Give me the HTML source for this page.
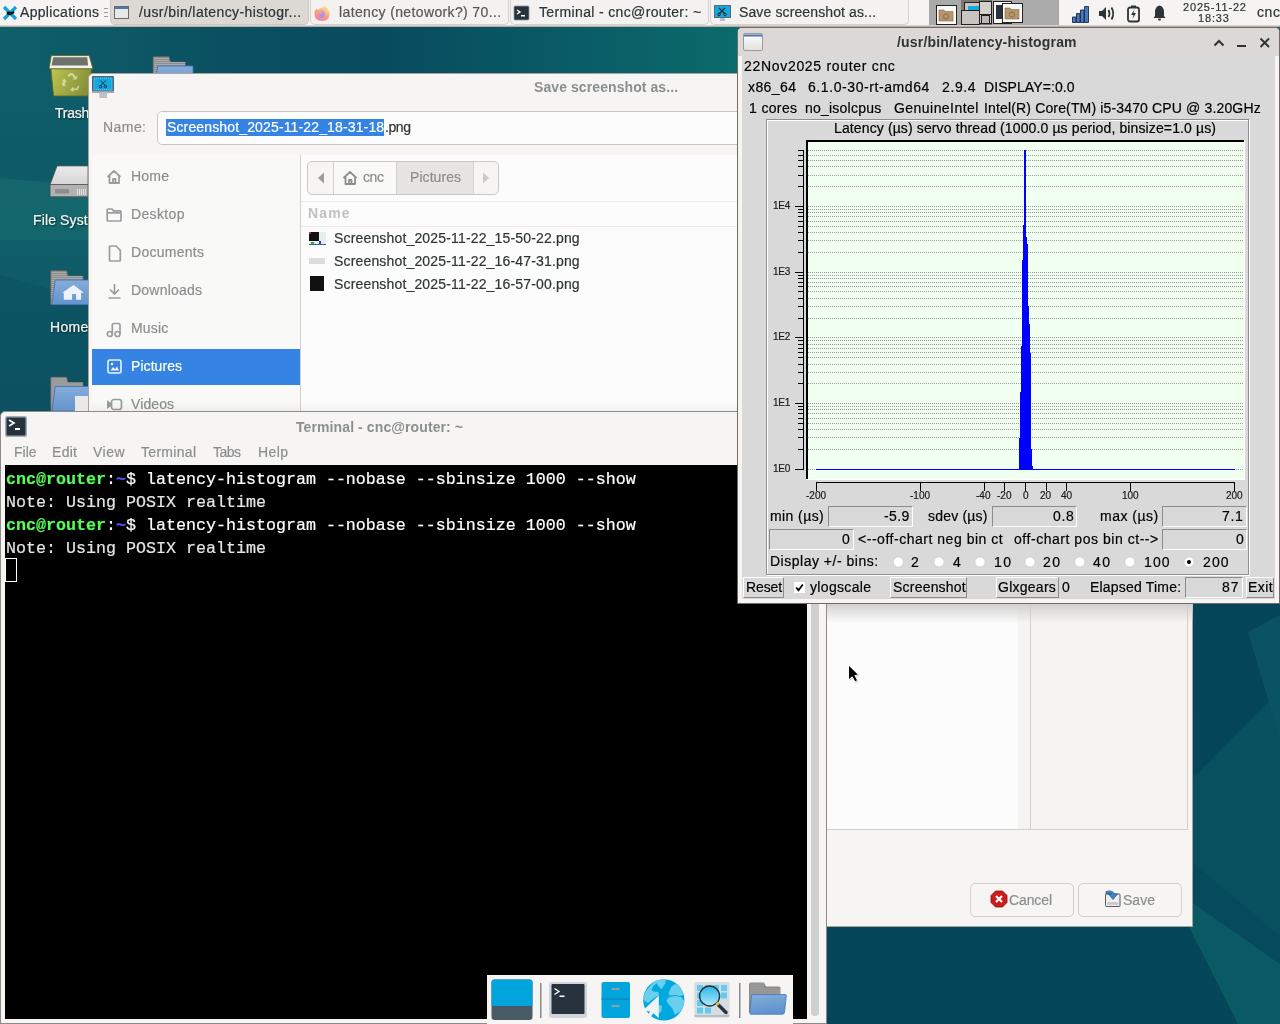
<!DOCTYPE html>
<html><head><meta charset="utf-8"><style>
*{margin:0;padding:0;box-sizing:border-box}
html,body{width:1280px;height:1024px;overflow:hidden;background:#0a4f60}
body{position:relative;font-family:"Liberation Sans",sans-serif}
.t{position:absolute;white-space:pre;line-height:1;will-change:transform;-webkit-text-stroke:0.2px currentColor}
.r{position:absolute}
svg{position:absolute;overflow:visible}
</style></head><body>

<svg style="left:0;top:0" width="1280" height="1024" viewBox="0 0 1280 1024">
<defs>
<linearGradient id="dgt" x1="0" y1="0" x2="1280" y2="0" gradientUnits="userSpaceOnUse">
<stop offset="0" stop-color="#0f5f6a"/><stop offset="0.2" stop-color="#0a4e61"/><stop offset="0.3" stop-color="#084b5f"/>
<stop offset="0.58" stop-color="#0b6b6c"/><stop offset="1" stop-color="#0b6b6c"/></linearGradient>
<linearGradient id="dgl" x1="0" y1="73" x2="0" y2="420" gradientUnits="userSpaceOnUse">
<stop offset="0" stop-color="#0f5e6a"/><stop offset="1" stop-color="#0b5061"/></linearGradient>
<linearGradient id="dgr" x1="820" y1="600" x2="1280" y2="1024" gradientUnits="userSpaceOnUse">
<stop offset="0" stop-color="#05455a"/><stop offset="1" stop-color="#05465b"/></linearGradient>
</defs>
<rect width="1280" height="1024" fill="url(#dgr)"/>
<rect x="0" y="27" width="1280" height="60" fill="url(#dgt)"/>
<rect x="0" y="73" width="88" height="350" fill="url(#dgl)"/>
<path d="M0 178 L88 186 L88 240 L0 240 Z" fill="#15696d" opacity="0.85"/>
<path d="M0 240 L88 240 L88 300 L0 275 Z" fill="#11606a" opacity="0.6"/>
<path d="M1193 778 L1280 690 L1280 937 L1193 863 Z" fill="#08505f"/>
<path d="M1248 632 L1280 615 L1280 740 Z" fill="#0b5264"/>
<path d="M1193 863 L1280 937 L1280 964 L1193 903 Z" fill="#064a5e"/>
<path d="M1193 903 L1280 964 L1280 1024 L1238 1024 L1188 925 Z" fill="#0a5a66"/>
</svg>
<svg style="left:0;top:0" width="260" height="420" viewBox="0 0 260 420">
<defs>
<linearGradient id="tbg" x1="0" y1="0" x2="1" y2="0.3"><stop offset="0" stop-color="#bcc550"/><stop offset="1" stop-color="#87913a"/></linearGradient>
<linearGradient id="fgb" x1="0" y1="0" x2="0" y2="1"><stop offset="0" stop-color="#85acd9"/><stop offset="1" stop-color="#6394cd"/></linearGradient>
<linearGradient id="hdg" x1="0" y1="0" x2="0" y2="1"><stop offset="0" stop-color="#ebebeb"/><stop offset="1" stop-color="#d6d6d6"/></linearGradient>
</defs>
<path d="M50.8 68.5 L91.6 68.5 L88 96 L53.5 96 Z" fill="url(#tbg)" stroke="#5f6614" stroke-width="0.9"/>
<path d="M51.3 55.6 L89.2 55.6 L93 68.8 L49 68.8 Z" fill="#f2f2f0" stroke="#5f6614" stroke-width="0.9"/>
<path d="M53.2 57.3 L87.3 57.3 L88 65.6 L51.5 65.6 Z" fill="#6f716b"/>
<g fill="#d9ddab" opacity="0.85">
<path d="M67.5 75.5 L70 73 L73 73.2 L75.5 76.5 L77.5 75.5 L76.5 79.5 L72.5 79.5 L74 78.3 L72 75.5 L70 75.5 L69 77.5 Z"/>
<path d="M62.5 80 L65 78.8 L66.5 81.5 L64.5 84.5 L66 86 L62.5 86 L61.5 82 L63 83 Z"/>
<path d="M70 90 L73.5 86.5 L73.5 88.5 L76.5 88.5 L78 85.5 L79.5 86.5 L77.5 90 L73.5 90 L73.5 92 Z"/>
</g>
<path d="M57.1 165.9 L88 165.9 L88 184.5 L50.1 184.5 Z" fill="url(#hdg)" stroke="#555" stroke-width="0.8"/>
<path d="M50.1 184.5 L88 184.5 L88 196.7 L50.1 196.7 Z" fill="#b2b2b2" stroke="#555" stroke-width="0.8"/>
<rect x="55" y="189" width="14" height="4.5" fill="#8e8e8e"/>
<g fill="#e8e8e8"><rect x="77" y="189" width="0.9" height="6"/><rect x="79" y="189" width="0.9" height="6"/><rect x="81" y="189" width="0.9" height="6"/><rect x="83" y="189" width="0.9" height="6"/><rect x="85" y="189" width="0.9" height="6"/></g>
<path d="M50.6 271.5 Q50.6 270.5 51.6 270.5 L66.6 270.5 L68.1 276.0 L83.1 276.0 L83.1 304.5 L50.6 304.5 Z" fill="#8c8c8c" stroke="#5a5a5a" stroke-width="0.6"/>
<g stroke="#aaaaaa" stroke-width="1"><line x1="51.6" y1="272.5" x2="66.6" y2="272.5"/><line x1="51.6" y1="274.5" x2="66.6" y2="274.5"/><line x1="51.6" y1="276.5" x2="82.6" y2="276.5"/><line x1="51.6" y1="278.5" x2="82.6" y2="278.5"/><line x1="51.6" y1="280.5" x2="82.6" y2="280.5"/><line x1="51.6" y1="282.5" x2="82.6" y2="282.5"/><line x1="51.6" y1="284.5" x2="82.6" y2="284.5"/><line x1="51.6" y1="286.5" x2="82.6" y2="286.5"/><line x1="51.6" y1="288.5" x2="82.6" y2="288.5"/><line x1="51.6" y1="290.5" x2="82.6" y2="290.5"/><line x1="51.6" y1="292.5" x2="82.6" y2="292.5"/><line x1="51.6" y1="294.5" x2="82.6" y2="294.5"/><line x1="51.6" y1="296.5" x2="82.6" y2="296.5"/><line x1="51.6" y1="298.5" x2="82.6" y2="298.5"/></g>
<path d="M55.2 280.0 L90.6 280.0 L90.6 304.7 L52.0 304.7 Z" fill="url(#fgb)" stroke="#3f6fb0" stroke-width="0.8"/><path d="M73.6 285.0 L83.80000000000001 292.8 L81.1 292.8 L81.1 299.8 L76.1 299.8 L76.1 294.0 L72.1 294.0 L72.1 299.8 L63.8 299.8 L63.8 292.8 L62.3 292.8 Z" fill="#eef3fa"/><path d="M50.6 378 Q50.6 377 51.6 377 L66.6 377 L68.1 382.5 L83.1 382.5 L83.1 411 L50.6 411 Z" fill="#8c8c8c" stroke="#5a5a5a" stroke-width="0.6"/>
<g stroke="#aaaaaa" stroke-width="1"><line x1="51.6" y1="379" x2="66.6" y2="379"/><line x1="51.6" y1="381" x2="66.6" y2="381"/><line x1="51.6" y1="383" x2="82.6" y2="383"/><line x1="51.6" y1="385" x2="82.6" y2="385"/><line x1="51.6" y1="387" x2="82.6" y2="387"/><line x1="51.6" y1="389" x2="82.6" y2="389"/><line x1="51.6" y1="391" x2="82.6" y2="391"/><line x1="51.6" y1="393" x2="82.6" y2="393"/><line x1="51.6" y1="395" x2="82.6" y2="395"/><line x1="51.6" y1="397" x2="82.6" y2="397"/><line x1="51.6" y1="399" x2="82.6" y2="399"/><line x1="51.6" y1="401" x2="82.6" y2="401"/><line x1="51.6" y1="403" x2="82.6" y2="403"/><line x1="51.6" y1="405" x2="82.6" y2="405"/></g>
<path d="M55.2 386.5 L90.6 386.5 L90.6 411.2 L52.0 411.2 Z" fill="url(#fgb)" stroke="#3f6fb0" stroke-width="0.8"/><path d="M153 57.5 Q153 56.5 154 56.5 L169 56.5 L170.5 62.0 L185.5 62.0 L185.5 90.5 L153 90.5 Z" fill="#8c8c8c" stroke="#5a5a5a" stroke-width="0.6"/>
<g stroke="#aaaaaa" stroke-width="1"><line x1="154" y1="58.5" x2="169" y2="58.5"/><line x1="154" y1="60.5" x2="169" y2="60.5"/><line x1="154" y1="62.5" x2="185" y2="62.5"/><line x1="154" y1="64.5" x2="185" y2="64.5"/><line x1="154" y1="66.5" x2="185" y2="66.5"/><line x1="154" y1="68.5" x2="185" y2="68.5"/><line x1="154" y1="70.5" x2="185" y2="70.5"/><line x1="154" y1="72.5" x2="185" y2="72.5"/><line x1="154" y1="74.5" x2="185" y2="74.5"/><line x1="154" y1="76.5" x2="185" y2="76.5"/><line x1="154" y1="78.5" x2="185" y2="78.5"/><line x1="154" y1="80.5" x2="185" y2="80.5"/><line x1="154" y1="82.5" x2="185" y2="82.5"/><line x1="154" y1="84.5" x2="185" y2="84.5"/></g>
<path d="M157.6 66.0 L193 66.0 L193 90.7 L154.4 90.7 Z" fill="url(#fgb)" stroke="#3f6fb0" stroke-width="0.8"/>
<rect x="75" y="396" width="13" height="15" fill="#e8e8e8"/>
</svg>
<div class="t" style="left:54.80px;top:106.15px;font-size:14px;color:#f4f4f4;font-family:'Liberation Sans', sans-serif;letter-spacing:-0.227px;text-shadow:1px 1px 2px rgba(0,0,0,.6);">Trash</div>
<div class="t" style="left:33.00px;top:213.15px;font-size:14px;color:#f4f4f4;font-family:'Liberation Sans', sans-serif;letter-spacing:0.122px;text-shadow:1px 1px 2px rgba(0,0,0,.6);">File System</div>
<div class="t" style="left:50.00px;top:320.15px;font-size:14px;color:#f4f4f4;font-family:'Liberation Sans', sans-serif;letter-spacing:0.354px;text-shadow:1px 1px 2px rgba(0,0,0,.6);">Home</div>
<div class="r" style="left:88px;top:73px;width:1105px;height:854px;background:#f6f5f4;border-radius:5px 5px 0 0;border:1px solid #aaa39d;"></div>
<svg style="left:92px;top:76px" width="23" height="23" viewBox="0 0 23 23">
<rect x="0" y="0" width="22" height="16.5" rx="0.8" fill="#56636d"/>
<rect x="1.3" y="1.3" width="19.4" height="13.2" fill="#12a8e0"/>
<rect x="2.2" y="2.2" width="17.6" height="11.4" fill="none" stroke="#e8f6fc" stroke-width="0.5" stroke-dasharray="0.8 1.2"/>
<rect x="0" y="14.8" width="22" height="1.7" fill="#9aa5ad"/>
<rect x="7.3" y="16.5" width="7.6" height="5.5" fill="#b9c3c9"/>
<path d="M8.3 4.5 L13.8 10 M13.8 4.5 L8.3 10" stroke="#1a2a35" stroke-width="0.9"/>
<circle cx="8.5" cy="10.6" r="1.3" fill="none" stroke="#1a2a35" stroke-width="0.9"/><circle cx="13.4" cy="10.6" r="1.3" fill="none" stroke="#1a2a35" stroke-width="0.9"/></svg>
<div class="t" style="left:533.50px;top:80.15px;font-size:14px;color:#8b8e8f;font-family:'Liberation Sans', sans-serif;font-weight:700;-webkit-text-stroke:0;letter-spacing:0.082px;">Save screenshot as...</div>
<div class="t" style="left:102.50px;top:120.15px;font-size:14px;color:#8b8e8f;font-family:'Liberation Sans', sans-serif;letter-spacing:0.445px;">Name:</div>
<div class="r" style="left:157px;top:111px;width:700px;height:34px;background:#fcfcfc;border:1px solid #cdc7c2;border-radius:5px"></div>
<div class="r" style="left:166px;top:119px;width:218px;height:17px;background:#3584e4;"></div>
<div class="t" style="left:166.50px;top:120.15px;font-size:14px;color:#ffffff;font-family:'Liberation Sans', sans-serif;letter-spacing:0.142px;">Screenshot_2025-11-22_18-31-18</div>
<div class="t" style="left:385.00px;top:120.15px;font-size:14px;color:#2e3436;font-family:'Liberation Sans', sans-serif;letter-spacing:-0.411px;">.png</div>
<div class="r" style="left:92px;top:155px;width:208px;height:256px;background:#f9f9f8;"></div>
<div class="r" style="left:300px;top:155px;width:1px;height:256px;background:#d5d0cc;"></div>
<div class="r" style="left:301px;top:155px;width:436px;height:256px;background:#fcfcfc;"></div>
<div class="r" style="left:92px;top:349px;width:208px;height:36px;background:#3584e4;"></div>
<div class="t" style="left:130.50px;top:169.15px;font-size:14px;color:#8b8e8f;font-family:'Liberation Sans', sans-serif;letter-spacing:0.224px;">Home</div>
<div class="t" style="left:130.50px;top:207.15px;font-size:14px;color:#8b8e8f;font-family:'Liberation Sans', sans-serif;letter-spacing:0.359px;">Desktop</div>
<div class="t" style="left:130.50px;top:245.15px;font-size:14px;color:#8b8e8f;font-family:'Liberation Sans', sans-serif;letter-spacing:0.277px;">Documents</div>
<div class="t" style="left:130.50px;top:283.15px;font-size:14px;color:#8b8e8f;font-family:'Liberation Sans', sans-serif;letter-spacing:0.221px;">Downloads</div>
<div class="t" style="left:130.50px;top:321.15px;font-size:14px;color:#8b8e8f;font-family:'Liberation Sans', sans-serif;letter-spacing:0.188px;">Music</div>
<div class="t" style="left:130.50px;top:359.15px;font-size:14px;color:#ffffff;font-family:'Liberation Sans', sans-serif;letter-spacing:0.062px;">Pictures</div>
<div class="t" style="left:130.50px;top:397.15px;font-size:14px;color:#8b8e8f;font-family:'Liberation Sans', sans-serif;letter-spacing:0.091px;">Videos</div>
<svg style="left:106px;top:169px" width="17" height="16" viewBox="0 0 17 16">
<path d="M1.5 8 L8 1.8 L14.5 8 M3.5 6.5 L3.5 14 L13 14 L13 6.5 M7 14 L7 10 L9.5 10 L9.5 14" stroke="#9a9d9e" stroke-width="1.8" fill="none" stroke-linejoin="round"/></svg>
<svg style="left:106px;top:208px" width="17" height="14" viewBox="0 0 17 14">
<path d="M1.2 2 Q1.2 1 2.2 1 L6 1 L7.5 2.8 L14 2.8 Q15 2.8 15 3.8 L15 12 Q15 13 14 13 L2.2 13 Q1.2 13 1.2 12 Z M1.2 4.8 L15 4.8" stroke="#9a9d9e" stroke-width="1.7" fill="none"/></svg>
<svg style="left:108px;top:245px" width="14" height="17" viewBox="0 0 14 17">
<path d="M1.5 2 Q1.5 1 2.5 1 L8 1 L12.3 5.3 L12.3 15 Q12.3 16 11.3 16 L2.5 16 Q1.5 16 1.5 15 Z" stroke="#9a9d9e" stroke-width="1.7" fill="none"/></svg>
<svg style="left:107px;top:283px" width="15" height="16" viewBox="0 0 15 16">
<path d="M7.5 1 L7.5 10.5 M3 6.5 L7.5 11 L12 6.5 M1.5 15 L13.5 15" stroke="#9a9d9e" stroke-width="1.7" fill="none"/></svg>
<svg style="left:106px;top:322px" width="16" height="16" viewBox="0 0 16 16">
<circle cx="3.8" cy="12" r="2.5" stroke="#9a9d9e" stroke-width="1.7" fill="none"/><circle cx="11.5" cy="12" r="2.5" stroke="#9a9d9e" stroke-width="1.7" fill="none"/>
<path d="M6.3 12 L6.3 3 Q6.3 1.5 8 1.5 L12.5 1.5 Q14 1.5 14 3 L14 12" stroke="#9a9d9e" stroke-width="1.7" fill="none"/></svg>
<svg style="left:107px;top:359px" width="15" height="15" viewBox="0 0 15 15">
<rect x="1" y="1" width="13" height="13" rx="2" stroke="#fff" stroke-width="1.6" fill="none" opacity="0.9"/>
<path d="M3.5 11.5 L6 8 L8 10 L10 7.5 L12 11.5 Z" fill="#fff" opacity="0.9"/><circle cx="5" cy="5" r="1.2" fill="#fff"/></svg>
<svg style="left:106px;top:398px" width="17" height="13" viewBox="0 0 17 13">
<path d="M1 2 L1 11 L5 8 L5 5 Z" fill="#9a9d9e"/><rect x="5.5" y="1.5" width="10" height="10" rx="2.5" stroke="#9a9d9e" stroke-width="1.7" fill="none"/></svg>
<div class="r" style="left:92px;top:401px;width:645px;height:10px;background:linear-gradient(rgba(0,0,0,0),rgba(0,0,0,0.045));"></div>
<div class="r" style="left:307px;top:161px;width:192px;height:34px;background:#f6f5f4;border:1px solid #cdc7c2;border-radius:5px"></div>
<div class="r" style="left:334px;top:162px;width:63px;height:32px;background:#f9f9f8;"></div>
<div class="r" style="left:397px;top:162px;width:76px;height:32px;background:#e6e5e3;"></div>
<div class="r" style="left:333px;top:162px;width:1px;height:32px;background:#d5d0cc;"></div>
<div class="r" style="left:396px;top:162px;width:1px;height:32px;background:#d5d0cc;"></div>
<div class="r" style="left:473px;top:162px;width:1px;height:32px;background:#d5d0cc;"></div>
<svg style="left:317px;top:172px" width="8" height="12" viewBox="0 0 8 12"><path d="M7 0.5 L1 6 L7 11.5 Z" fill="#9a9d9e"/></svg>
<svg style="left:482px;top:172px" width="8" height="12" viewBox="0 0 8 12"><path d="M1 0.5 L7 6 L1 11.5 Z" fill="#c9cbcb"/></svg>
<svg style="left:342px;top:170px" width="17" height="16" viewBox="0 0 17 16">
<path d="M1.5 8 L8 1.8 L14.5 8 M3.5 6.5 L3.5 14 L13 14 L13 6.5 M7 14 L7 10 L9.5 10 L9.5 14" stroke="#8b8e8f" stroke-width="1.8" fill="none" stroke-linejoin="round"/></svg>
<div class="t" style="left:362.50px;top:170.15px;font-size:14px;color:#8b8e8f;font-family:'Liberation Sans', sans-serif;letter-spacing:-0.391px;">cnc</div>
<div class="t" style="left:409.50px;top:170.15px;font-size:14px;color:#8b8e8f;font-family:'Liberation Sans', sans-serif;letter-spacing:0.062px;">Pictures</div>
<div class="r" style="left:301px;top:201px;width:436px;height:1px;background:#eeedec;"></div>
<div class="t" style="left:308.00px;top:206.15px;font-size:14px;color:#c0c1c1;font-family:'Liberation Sans', sans-serif;font-weight:700;-webkit-text-stroke:0;letter-spacing:1.125px;">Name</div>
<div class="r" style="left:301px;top:226px;width:436px;height:1px;background:#eeedec;"></div>
<div class="t" style="left:333.50px;top:231.15px;font-size:14px;color:#2e3436;font-family:'Liberation Sans', sans-serif;letter-spacing:0.163px;">Screenshot_2025-11-22_15-50-22.png</div>
<div class="t" style="left:333.50px;top:254.15px;font-size:14px;color:#2e3436;font-family:'Liberation Sans', sans-serif;letter-spacing:0.163px;">Screenshot_2025-11-22_16-47-31.png</div>
<div class="t" style="left:333.50px;top:277.15px;font-size:14px;color:#2e3436;font-family:'Liberation Sans', sans-serif;letter-spacing:0.163px;">Screenshot_2025-11-22_16-57-00.png</div>
<svg style="left:309px;top:232px" width="17" height="14" viewBox="0 0 17 14">
<rect x="0" y="0" width="17" height="13" fill="#e8eef0"/><rect x="0" y="0" width="10" height="9" fill="#111"/>
<rect x="0" y="0" width="2" height="2" fill="#c33"/><rect x="2" y="10" width="3" height="2" fill="#3a3"/><rect x="10" y="9" width="2" height="3" fill="#33c"/>
<rect x="0" y="12" width="17" height="1" fill="#2a6a8a"/></svg>
<div class="r" style="left:309px;top:258px;width:16px;height:6px;background:#dcdcdc;"></div>
<div class="r" style="left:310px;top:276px;width:14px;height:15px;background:#111;"></div>
<div class="r" style="left:827px;top:603px;width:203px;height:227px;background:#fcfcfc;"></div>
<div class="r" style="left:1018px;top:603px;width:12px;height:227px;background:#f4f4f3;"></div>
<div class="r" style="left:1030px;top:603px;width:1px;height:227px;background:#d5d0cc;"></div>
<div class="r" style="left:1031px;top:603px;width:157px;height:227px;background:#f5f4f2;"></div>
<div class="r" style="left:1187px;top:603px;width:1px;height:227px;background:#d5d0cc;"></div>
<div class="r" style="left:827px;top:829px;width:361px;height:1px;background:#d5d0cc;"></div>
<div class="r" style="left:827px;top:603px;width:366px;height:20px;background:linear-gradient(#d0cfce,rgba(246,245,244,0));"></div>
<div class="r" style="left:970px;top:883px;width:104px;height:34px;background:#f6f5f4;border:1px solid #d5d0cc;border-radius:5px"></div>
<div class="r" style="left:1078px;top:883px;width:104px;height:34px;background:#f6f5f4;border:1px solid #d5d0cc;border-radius:5px"></div>
<svg style="left:990px;top:890px" width="18" height="18" viewBox="0 0 18 18">
<path d="M5.5 1 L12.5 1 L17 5.5 L17 12.5 L12.5 17 L5.5 17 L1 12.5 L1 5.5 Z" fill="#d01b1b" stroke="#8a0e0e" stroke-width="0.8"/>
<path d="M6 6 L12 12 M12 6 L6 12" stroke="#fff" stroke-width="2.2"/></svg>
<div class="t" style="left:1009.00px;top:893.15px;font-size:14px;color:#8b8e8f;font-family:'Liberation Sans', sans-serif;letter-spacing:-0.113px;">Cancel</div>
<svg style="left:1104px;top:889px" width="18" height="19" viewBox="0 0 18 19">
<rect x="1.5" y="5" width="14.5" height="12.5" rx="0.8" fill="#eeeeee" stroke="#5a5a5a" stroke-width="1"/>
<rect x="3" y="13.5" width="11.5" height="2.5" fill="#cfcfcf"/>
<path d="M4 13.8 L13.5 13.8" stroke="#888" stroke-width="0.5" stroke-dasharray="1 0.8"/>
<path d="M2 2.5 Q8 0.5 10.5 5 L13.5 5 L9 10.5 L4.5 5 L7.5 5 Q6 3.5 2 5 Z" fill="#3f87cc" stroke="#1f4f80" stroke-width="0.7" stroke-linejoin="round"/>
</svg>
<div class="t" style="left:1123.00px;top:893.15px;font-size:14px;color:#8b8e8f;font-family:'Liberation Sans', sans-serif;letter-spacing:0.031px;">Save</div>
<div class="r" style="left:0px;top:411px;width:827px;height:613px;background:#f6f5f4;border:1px solid #8f8a85;border-radius:5px 5px 0 0"></div>
<div class="r" style="left:5px;top:465px;width:802px;height:554px;background:#000;"></div>
<div class="r" style="left:811px;top:600px;width:8px;height:416px;background:#cfcfcf;border-radius:4px"></div>
<svg style="left:5px;top:416px" width="22" height="21" viewBox="0 0 22 21">
<rect x="0.75" y="0.75" width="20.5" height="19.5" rx="1.5" fill="#27323c" stroke="#a3adb5" stroke-width="1.5"/>
<path d="M4 4 L9 7 L4 10" stroke="#fff" stroke-width="1.6" fill="none"/><rect x="10" y="12" width="5" height="2" fill="#fff"/></svg>
<div class="t" style="left:295.50px;top:419.95px;font-size:14px;color:#8b8e8f;font-family:'Liberation Sans', sans-serif;font-weight:700;-webkit-text-stroke:0;letter-spacing:0.101px;">Terminal - cnc@router: ~</div>
<div class="t" style="left:14.00px;top:445.15px;font-size:14px;color:#8b8e8f;font-family:'Liberation Sans', sans-serif;letter-spacing:-0.016px;">File</div>
<div class="t" style="left:52.00px;top:445.15px;font-size:14px;color:#8b8e8f;font-family:'Liberation Sans', sans-serif;letter-spacing:0.292px;">Edit</div>
<div class="t" style="left:93.00px;top:445.15px;font-size:14px;color:#8b8e8f;font-family:'Liberation Sans', sans-serif;letter-spacing:0.469px;">View</div>
<div class="t" style="left:141.00px;top:445.15px;font-size:14px;color:#8b8e8f;font-family:'Liberation Sans', sans-serif;letter-spacing:0.304px;">Terminal</div>
<div class="t" style="left:213.00px;top:445.15px;font-size:14px;color:#8b8e8f;font-family:'Liberation Sans', sans-serif;letter-spacing:-0.521px;">Tabs</div>
<div class="t" style="left:258.00px;top:445.15px;font-size:14px;color:#8b8e8f;font-family:'Liberation Sans', sans-serif;letter-spacing:0.406px;">Help</div>
<div class="t" style="left:6px;top:471.92px;font-size:16.67px;font-family:'Liberation Mono',monospace;"><span style="color:#55ff55;font-weight:700;">cnc@router</span><span style="color:#ffffff;">:</span><span style="color:#5555ff;font-weight:700;">~</span><span style="color:#ffffff;">$</span><span style="color:#ffffff;"> latency-histogram --nobase --sbinsize 1000 --show</span></div>
<div class="t" style="left:6px;top:517.92px;font-size:16.67px;font-family:'Liberation Mono',monospace;"><span style="color:#55ff55;font-weight:700;">cnc@router</span><span style="color:#ffffff;">:</span><span style="color:#5555ff;font-weight:700;">~</span><span style="color:#ffffff;">$</span><span style="color:#ffffff;"> latency-histogram --nobase --sbinsize 1000 --show</span></div>
<div class="t" style="left:6px;top:494.92px;font-size:16.67px;font-family:'Liberation Mono',monospace;"><span style="color:#e5e5e5;">Note: Using POSIX realtime</span></div>
<div class="t" style="left:6px;top:540.92px;font-size:16.67px;font-family:'Liberation Mono',monospace;"><span style="color:#e5e5e5;">Note: Using POSIX realtime</span></div>
<div class="r" style="left:5px;top:558px;width:12px;height:24px;background:transparent;border:1px solid #fff"></div>
<div class="r" style="left:737px;top:27px;width:543px;height:577px;background:#f6f5f4;border:1px solid #6f6a66;border-radius:5px 5px 0 0"></div>
<div class="r" style="left:738px;top:28px;width:541px;height:28px;background:#dcd8d5;border-radius:4px 4px 0 0"></div>
<div class="r" style="left:742px;top:56px;width:533px;height:543px;background:#d9d9d9;"></div>
<svg style="left:743px;top:33px" width="20" height="18" viewBox="0 0 20 18">
<defs><linearGradient id="wg" x1="0" y1="0" x2="0" y2="1"><stop offset="0" stop-color="#fff"/><stop offset="1" stop-color="#dfe2df"/></linearGradient></defs>
<rect x="0.5" y="0.5" width="19" height="17" rx="1.5" fill="url(#wg)" stroke="#9a9a9a"/>
<rect x="1" y="1.5" width="18" height="2" fill="#4a72b0"/></svg>
<div class="t" style="left:896.50px;top:35.15px;font-size:14px;color:#2e3436;font-family:'Liberation Sans', sans-serif;font-weight:700;-webkit-text-stroke:0;letter-spacing:0.181px;">/usr/bin/latency-histogram</div>
<svg style="left:1212px;top:36px" width="60" height="14" viewBox="0 0 60 14">
<path d="M2.5 9.5 L7 5 L11.5 9.5" stroke="#2e3436" stroke-width="2" fill="none"/>
<rect x="25" y="9" width="9" height="2" fill="#2e3436"/>
<path d="M48.5 2.5 L57 11 M57 2.5 L48.5 11" stroke="#2e3436" stroke-width="2"/></svg>
<div class="t" style="left:744.20px;top:59.15px;font-size:14px;color:#000;font-family:'Liberation Sans', sans-serif;letter-spacing:0.690px;">22Nov2025 router cnc</div>
<div class="t" style="left:748.40px;top:79.65px;font-size:14px;color:#000;font-family:'Liberation Sans', sans-serif;letter-spacing:0.409px;">x86_64</div>
<div class="t" style="left:807.50px;top:79.65px;font-size:14px;color:#000;font-family:'Liberation Sans', sans-serif;letter-spacing:0.582px;">6.1.0-30-rt-amd64</div>
<div class="t" style="left:941.50px;top:79.65px;font-size:14px;color:#000;font-family:'Liberation Sans', sans-serif;letter-spacing:0.605px;">2.9.4</div>
<div class="t" style="left:984.30px;top:79.65px;font-size:14px;color:#000;font-family:'Liberation Sans', sans-serif;letter-spacing:0.080px;">DISPLAY=:0.0</div>
<div class="t" style="left:748.90px;top:100.65px;font-size:14px;color:#000;font-family:'Liberation Sans', sans-serif;letter-spacing:0.352px;">1 cores</div>
<div class="t" style="left:805.40px;top:100.65px;font-size:14px;color:#000;font-family:'Liberation Sans', sans-serif;letter-spacing:0.222px;">no_isolcpus</div>
<div class="t" style="left:893.60px;top:100.65px;font-size:14px;color:#000;font-family:'Liberation Sans', sans-serif;letter-spacing:0.455px;">GenuineIntel</div>
<div class="t" style="left:984.30px;top:100.65px;font-size:14px;color:#000;font-family:'Liberation Sans', sans-serif;letter-spacing:0.150px;">Intel(R) Core(TM) i5-3470 CPU @ 3.20GHz</div>
<div class="r" style="left:767px;top:120px;width:483px;height:456px;background:transparent;border:1px solid #fff"></div>
<div class="r" style="left:766px;top:119px;width:483px;height:456px;background:transparent;border:1px solid #8f8f8f"></div>
<div class="t" style="left:834.20px;top:120.75px;font-size:14px;color:#000;font-family:'Liberation Sans', sans-serif;letter-spacing:0.122px;">Latency (µs) servo thread (1000.0 µs period, binsize=1.0 µs)</div>
<svg style="left:0;top:0" width="1280" height="1024" viewBox="0 0 1280 1024" shape-rendering="crispEdges"><rect x="806" y="140" width="439" height="340" fill="#ffffff"/><rect x="806" y="140" width="438" height="339" fill="#000"/><rect x="808" y="142" width="436" height="337" fill="#f0fff0"/><line x1="808" y1="469.5" x2="1243" y2="469.5" stroke="#9a9a9a" stroke-width="1" stroke-dasharray="1 1"/><line x1="808" y1="449.5" x2="1243" y2="449.5" stroke="#9a9a9a" stroke-width="1" stroke-dasharray="1 1"/><line x1="808" y1="437.5" x2="1243" y2="437.5" stroke="#9a9a9a" stroke-width="1" stroke-dasharray="1 1"/><line x1="808" y1="429.5" x2="1243" y2="429.5" stroke="#9a9a9a" stroke-width="1" stroke-dasharray="1 1"/><line x1="808" y1="423.5" x2="1243" y2="423.5" stroke="#9a9a9a" stroke-width="1" stroke-dasharray="1 1"/><line x1="808" y1="418.5" x2="1243" y2="418.5" stroke="#9a9a9a" stroke-width="1" stroke-dasharray="1 1"/><line x1="808" y1="413.5" x2="1243" y2="413.5" stroke="#9a9a9a" stroke-width="1" stroke-dasharray="1 1"/><line x1="808" y1="409.5" x2="1243" y2="409.5" stroke="#9a9a9a" stroke-width="1" stroke-dasharray="1 1"/><line x1="808" y1="406.5" x2="1243" y2="406.5" stroke="#9a9a9a" stroke-width="1" stroke-dasharray="1 1"/><line x1="808" y1="403.5" x2="1243" y2="403.5" stroke="#9a9a9a" stroke-width="1" stroke-dasharray="1 1"/><line x1="808" y1="383.5" x2="1243" y2="383.5" stroke="#9a9a9a" stroke-width="1" stroke-dasharray="1 1"/><line x1="808" y1="372.5" x2="1243" y2="372.5" stroke="#9a9a9a" stroke-width="1" stroke-dasharray="1 1"/><line x1="808" y1="364.5" x2="1243" y2="364.5" stroke="#9a9a9a" stroke-width="1" stroke-dasharray="1 1"/><line x1="808" y1="357.5" x2="1243" y2="357.5" stroke="#9a9a9a" stroke-width="1" stroke-dasharray="1 1"/><line x1="808" y1="352.5" x2="1243" y2="352.5" stroke="#9a9a9a" stroke-width="1" stroke-dasharray="1 1"/><line x1="808" y1="348.5" x2="1243" y2="348.5" stroke="#9a9a9a" stroke-width="1" stroke-dasharray="1 1"/><line x1="808" y1="344.5" x2="1243" y2="344.5" stroke="#9a9a9a" stroke-width="1" stroke-dasharray="1 1"/><line x1="808" y1="340.5" x2="1243" y2="340.5" stroke="#9a9a9a" stroke-width="1" stroke-dasharray="1 1"/><line x1="808" y1="337.5" x2="1243" y2="337.5" stroke="#9a9a9a" stroke-width="1" stroke-dasharray="1 1"/><line x1="808" y1="318.5" x2="1243" y2="318.5" stroke="#9a9a9a" stroke-width="1" stroke-dasharray="1 1"/><line x1="808" y1="306.5" x2="1243" y2="306.5" stroke="#9a9a9a" stroke-width="1" stroke-dasharray="1 1"/><line x1="808" y1="298.5" x2="1243" y2="298.5" stroke="#9a9a9a" stroke-width="1" stroke-dasharray="1 1"/><line x1="808" y1="291.5" x2="1243" y2="291.5" stroke="#9a9a9a" stroke-width="1" stroke-dasharray="1 1"/><line x1="808" y1="286.5" x2="1243" y2="286.5" stroke="#9a9a9a" stroke-width="1" stroke-dasharray="1 1"/><line x1="808" y1="282.5" x2="1243" y2="282.5" stroke="#9a9a9a" stroke-width="1" stroke-dasharray="1 1"/><line x1="808" y1="278.5" x2="1243" y2="278.5" stroke="#9a9a9a" stroke-width="1" stroke-dasharray="1 1"/><line x1="808" y1="275.5" x2="1243" y2="275.5" stroke="#9a9a9a" stroke-width="1" stroke-dasharray="1 1"/><line x1="808" y1="272.5" x2="1243" y2="272.5" stroke="#9a9a9a" stroke-width="1" stroke-dasharray="1 1"/><line x1="808" y1="252.5" x2="1243" y2="252.5" stroke="#9a9a9a" stroke-width="1" stroke-dasharray="1 1"/><line x1="808" y1="240.5" x2="1243" y2="240.5" stroke="#9a9a9a" stroke-width="1" stroke-dasharray="1 1"/><line x1="808" y1="232.5" x2="1243" y2="232.5" stroke="#9a9a9a" stroke-width="1" stroke-dasharray="1 1"/><line x1="808" y1="226.5" x2="1243" y2="226.5" stroke="#9a9a9a" stroke-width="1" stroke-dasharray="1 1"/><line x1="808" y1="221.5" x2="1243" y2="221.5" stroke="#9a9a9a" stroke-width="1" stroke-dasharray="1 1"/><line x1="808" y1="216.5" x2="1243" y2="216.5" stroke="#9a9a9a" stroke-width="1" stroke-dasharray="1 1"/><line x1="808" y1="212.5" x2="1243" y2="212.5" stroke="#9a9a9a" stroke-width="1" stroke-dasharray="1 1"/><line x1="808" y1="209.5" x2="1243" y2="209.5" stroke="#9a9a9a" stroke-width="1" stroke-dasharray="1 1"/><line x1="808" y1="206.5" x2="1243" y2="206.5" stroke="#9a9a9a" stroke-width="1" stroke-dasharray="1 1"/><line x1="808" y1="186.5" x2="1243" y2="186.5" stroke="#9a9a9a" stroke-width="1" stroke-dasharray="1 1"/><line x1="808" y1="175.5" x2="1243" y2="175.5" stroke="#9a9a9a" stroke-width="1" stroke-dasharray="1 1"/><line x1="808" y1="166.5" x2="1243" y2="166.5" stroke="#9a9a9a" stroke-width="1" stroke-dasharray="1 1"/><line x1="808" y1="160.5" x2="1243" y2="160.5" stroke="#9a9a9a" stroke-width="1" stroke-dasharray="1 1"/><line x1="808" y1="155.5" x2="1243" y2="155.5" stroke="#9a9a9a" stroke-width="1" stroke-dasharray="1 1"/><line x1="808" y1="150.5" x2="1243" y2="150.5" stroke="#9a9a9a" stroke-width="1" stroke-dasharray="1 1"/><rect x="795" y="469" width="8" height="1" fill="#000"/><rect x="798" y="449" width="5" height="1" fill="#000"/><rect x="798" y="437" width="5" height="1" fill="#000"/><rect x="798" y="429" width="5" height="1" fill="#000"/><rect x="798" y="423" width="5" height="1" fill="#000"/><rect x="798" y="418" width="5" height="1" fill="#000"/><rect x="798" y="413" width="5" height="1" fill="#000"/><rect x="798" y="409" width="5" height="1" fill="#000"/><rect x="798" y="406" width="5" height="1" fill="#000"/><rect x="795" y="403" width="8" height="1" fill="#000"/><rect x="798" y="383" width="5" height="1" fill="#000"/><rect x="798" y="372" width="5" height="1" fill="#000"/><rect x="798" y="364" width="5" height="1" fill="#000"/><rect x="798" y="357" width="5" height="1" fill="#000"/><rect x="798" y="352" width="5" height="1" fill="#000"/><rect x="798" y="348" width="5" height="1" fill="#000"/><rect x="798" y="344" width="5" height="1" fill="#000"/><rect x="798" y="340" width="5" height="1" fill="#000"/><rect x="795" y="337" width="8" height="1" fill="#000"/><rect x="798" y="318" width="5" height="1" fill="#000"/><rect x="798" y="306" width="5" height="1" fill="#000"/><rect x="798" y="298" width="5" height="1" fill="#000"/><rect x="798" y="291" width="5" height="1" fill="#000"/><rect x="798" y="286" width="5" height="1" fill="#000"/><rect x="798" y="282" width="5" height="1" fill="#000"/><rect x="798" y="278" width="5" height="1" fill="#000"/><rect x="798" y="275" width="5" height="1" fill="#000"/><rect x="795" y="272" width="8" height="1" fill="#000"/><rect x="798" y="252" width="5" height="1" fill="#000"/><rect x="798" y="240" width="5" height="1" fill="#000"/><rect x="798" y="232" width="5" height="1" fill="#000"/><rect x="798" y="226" width="5" height="1" fill="#000"/><rect x="798" y="221" width="5" height="1" fill="#000"/><rect x="798" y="216" width="5" height="1" fill="#000"/><rect x="798" y="212" width="5" height="1" fill="#000"/><rect x="798" y="209" width="5" height="1" fill="#000"/><rect x="795" y="206" width="8" height="1" fill="#000"/><rect x="798" y="186" width="5" height="1" fill="#000"/><rect x="798" y="175" width="5" height="1" fill="#000"/><rect x="798" y="166" width="5" height="1" fill="#000"/><rect x="798" y="160" width="5" height="1" fill="#000"/><rect x="798" y="155" width="5" height="1" fill="#000"/><rect x="798" y="150" width="5" height="1" fill="#000"/><rect x="803" y="150" width="1" height="320" fill="#000"/><polygon fill="#0000ff" points="1019,470 1019,438 1020,438 1020,392 1021,392 1021,346 1022,346 1022,260 1023,260 1023,225 1024,225 1024,150 1026,150 1026,237 1027,237 1027,244 1028,244 1028,306 1029,306 1029,324 1030,324 1030,353 1031,353 1031,449 1032,449 1032,466 1033,466 1033,470"/><rect x="816" y="469" width="419" height="1" fill="#0000ff"/><rect x="816" y="482" width="419" height="1" fill="#000"/><rect x="816" y="482" width="1" height="9" fill="#000"/><rect x="920" y="482" width="1" height="9" fill="#000"/><rect x="984" y="482" width="1" height="9" fill="#000"/><rect x="1004" y="482" width="1" height="9" fill="#000"/><rect x="1025" y="482" width="1" height="9" fill="#000"/><rect x="1046" y="482" width="1" height="9" fill="#000"/><rect x="1066" y="482" width="1" height="9" fill="#000"/><rect x="1130" y="482" width="1" height="9" fill="#000"/><rect x="1234" y="482" width="1" height="9" fill="#000"/></svg>
<div class="t" style="left:772.80px;top:463.64px;font-size:10px;color:#1a1a1a;font-family:'Liberation Sans', sans-serif;letter-spacing:-0.298px;">1E0</div>
<div class="t" style="left:772.80px;top:397.94px;font-size:10px;color:#1a1a1a;font-family:'Liberation Sans', sans-serif;letter-spacing:-0.298px;">1E1</div>
<div class="t" style="left:772.80px;top:332.24px;font-size:10px;color:#1a1a1a;font-family:'Liberation Sans', sans-serif;letter-spacing:-0.298px;">1E2</div>
<div class="t" style="left:772.80px;top:266.54px;font-size:10px;color:#1a1a1a;font-family:'Liberation Sans', sans-serif;letter-spacing:-0.298px;">1E3</div>
<div class="t" style="left:772.80px;top:200.84px;font-size:10px;color:#1a1a1a;font-family:'Liberation Sans', sans-serif;letter-spacing:-0.298px;">1E4</div>
<div class="t" style="left:805.69px;top:491.34px;font-size:10px;color:#1a1a1a;font-family:'Liberation Sans', sans-serif;">-200</div>
<div class="t" style="left:910.19px;top:491.34px;font-size:10px;color:#1a1a1a;font-family:'Liberation Sans', sans-serif;">-100</div>
<div class="t" style="left:975.97px;top:491.34px;font-size:10px;color:#1a1a1a;font-family:'Liberation Sans', sans-serif;">-40</div>
<div class="t" style="left:996.97px;top:491.34px;font-size:10px;color:#1a1a1a;font-family:'Liberation Sans', sans-serif;">-20</div>
<div class="t" style="left:1022.72px;top:491.34px;font-size:10px;color:#1a1a1a;font-family:'Liberation Sans', sans-serif;">0</div>
<div class="t" style="left:1040.44px;top:491.34px;font-size:10px;color:#1a1a1a;font-family:'Liberation Sans', sans-serif;">20</div>
<div class="t" style="left:1061.44px;top:491.34px;font-size:10px;color:#1a1a1a;font-family:'Liberation Sans', sans-serif;">40</div>
<div class="t" style="left:1121.66px;top:491.34px;font-size:10px;color:#1a1a1a;font-family:'Liberation Sans', sans-serif;">100</div>
<div class="t" style="left:1226.16px;top:491.34px;font-size:10px;color:#1a1a1a;font-family:'Liberation Sans', sans-serif;">200</div>
<div class="r" style="left:828px;top:506px;width:85px;height:21px;background:#d9d9d9;border-top:1px solid #8c8c8c;border-left:1px solid #8c8c8c;border-bottom:1px solid #fff;border-right:1px solid #fff"></div>
<div class="r" style="left:992px;top:506px;width:85px;height:21px;background:#d9d9d9;border-top:1px solid #8c8c8c;border-left:1px solid #8c8c8c;border-bottom:1px solid #fff;border-right:1px solid #fff"></div>
<div class="r" style="left:1162px;top:506px;width:85px;height:21px;background:#d9d9d9;border-top:1px solid #8c8c8c;border-left:1px solid #8c8c8c;border-bottom:1px solid #fff;border-right:1px solid #fff"></div>
<div class="r" style="left:769px;top:529px;width:85px;height:21px;background:#d9d9d9;border-top:1px solid #8c8c8c;border-left:1px solid #8c8c8c;border-bottom:1px solid #fff;border-right:1px solid #fff"></div>
<div class="r" style="left:1162px;top:529px;width:85px;height:21px;background:#d9d9d9;border-top:1px solid #8c8c8c;border-left:1px solid #8c8c8c;border-bottom:1px solid #fff;border-right:1px solid #fff"></div>
<div class="t" style="left:770.40px;top:508.95px;font-size:14px;color:#000;font-family:'Liberation Sans', sans-serif;letter-spacing:0.413px;">min (µs)</div>
<div class="t" style="left:928.40px;top:508.95px;font-size:14px;color:#000;font-family:'Liberation Sans', sans-serif;letter-spacing:0.196px;">sdev (µs)</div>
<div class="t" style="left:1100.40px;top:508.95px;font-size:14px;color:#000;font-family:'Liberation Sans', sans-serif;letter-spacing:0.500px;">max (µs)</div>
<div class="t" style="left:884.36px;top:508.95px;font-size:14px;color:#000;font-family:'Liberation Sans', sans-serif;letter-spacing:0.411px;">-5.9</div>
<div class="t" style="left:1053.04px;top:508.95px;font-size:14px;color:#000;font-family:'Liberation Sans', sans-serif;letter-spacing:0.602px;">0.8</div>
<div class="t" style="left:1222.34px;top:508.95px;font-size:14px;color:#000;font-family:'Liberation Sans', sans-serif;letter-spacing:0.602px;">7.1</div>
<div class="t" style="left:842.22px;top:531.65px;font-size:14px;color:#000;font-family:'Liberation Sans', sans-serif;">0</div>
<div class="t" style="left:1235.62px;top:531.65px;font-size:14px;color:#000;font-family:'Liberation Sans', sans-serif;">0</div>
<div class="t" style="left:858.00px;top:531.65px;font-size:14px;color:#000;font-family:'Liberation Sans', sans-serif;letter-spacing:0.525px;">&lt;--off-chart neg bin ct</div>
<div class="t" style="left:1014.40px;top:531.65px;font-size:14px;color:#000;font-family:'Liberation Sans', sans-serif;letter-spacing:0.538px;">off-chart pos bin ct--&gt;</div>
<div class="t" style="left:770.40px;top:554.45px;font-size:14px;color:#000;font-family:'Liberation Sans', sans-serif;letter-spacing:0.509px;">Display +/- bins:</div>
<svg style="left:0;top:0" width="1280" height="1024" viewBox="0 0 1280 1024"><circle cx="898.3" cy="562" r="5" fill="#fff" stroke="#c8c8c8" stroke-width="0.6"/><circle cx="939" cy="562" r="5" fill="#fff" stroke="#c8c8c8" stroke-width="0.6"/><circle cx="980" cy="562" r="5" fill="#fff" stroke="#c8c8c8" stroke-width="0.6"/><circle cx="1030" cy="562" r="5" fill="#fff" stroke="#c8c8c8" stroke-width="0.6"/><circle cx="1079.8" cy="562" r="5" fill="#fff" stroke="#c8c8c8" stroke-width="0.6"/><circle cx="1129.9" cy="562" r="5" fill="#fff" stroke="#c8c8c8" stroke-width="0.6"/><circle cx="1189" cy="562" r="5" fill="#fff" stroke="#c8c8c8" stroke-width="0.6"/><circle cx="1189" cy="562" r="2" fill="#000"/></svg>
<div class="t" style="left:911.30px;top:554.65px;font-size:14px;color:#000;font-family:'Liberation Sans', sans-serif;">2</div>
<div class="t" style="left:952.70px;top:554.65px;font-size:14px;color:#000;font-family:'Liberation Sans', sans-serif;">4</div>
<div class="t" style="left:994.00px;top:554.65px;font-size:14px;color:#000;font-family:'Liberation Sans', sans-serif;letter-spacing:1.469px;">10</div>
<div class="t" style="left:1043.30px;top:554.65px;font-size:14px;color:#000;font-family:'Liberation Sans', sans-serif;letter-spacing:1.469px;">20</div>
<div class="t" style="left:1093.30px;top:554.65px;font-size:14px;color:#000;font-family:'Liberation Sans', sans-serif;letter-spacing:1.469px;">40</div>
<div class="t" style="left:1143.80px;top:554.65px;font-size:14px;color:#000;font-family:'Liberation Sans', sans-serif;letter-spacing:1.102px;">100</div>
<div class="t" style="left:1202.60px;top:554.65px;font-size:14px;color:#000;font-family:'Liberation Sans', sans-serif;letter-spacing:1.102px;">200</div>
<div class="r" style="left:743px;top:577px;width:41px;height:21px;background:#d9d9d9;border-top:1px solid #fff;border-left:1px solid #fff;border-bottom:1px solid #8c8c8c;border-right:1px solid #8c8c8c"></div>
<div class="r" style="left:890px;top:577px;width:77px;height:21px;background:#d9d9d9;border-top:1px solid #fff;border-left:1px solid #fff;border-bottom:1px solid #8c8c8c;border-right:1px solid #8c8c8c"></div>
<div class="r" style="left:996px;top:577px;width:63px;height:21px;background:#d9d9d9;border-top:1px solid #fff;border-left:1px solid #fff;border-bottom:1px solid #8c8c8c;border-right:1px solid #8c8c8c"></div>
<div class="r" style="left:1246px;top:577px;width:28px;height:21px;background:#d9d9d9;border-top:1px solid #fff;border-left:1px solid #fff;border-bottom:1px solid #8c8c8c;border-right:1px solid #8c8c8c"></div>
<div class="r" style="left:1185px;top:577px;width:58px;height:21px;background:#d9d9d9;border-top:1px solid #8c8c8c;border-left:1px solid #8c8c8c;border-bottom:1px solid #fff;border-right:1px solid #fff"></div>
<div class="t" style="left:745.80px;top:580.15px;font-size:14px;color:#000;font-family:'Liberation Sans', sans-serif;letter-spacing:-0.091px;">Reset</div>
<div class="t" style="left:892.50px;top:580.15px;font-size:14px;color:#000;font-family:'Liberation Sans', sans-serif;letter-spacing:0.211px;">Screenshot</div>
<div class="t" style="left:998.40px;top:580.15px;font-size:14px;color:#000;font-family:'Liberation Sans', sans-serif;letter-spacing:0.257px;">Glxgears</div>
<div class="t" style="left:1247.50px;top:580.15px;font-size:14px;color:#000;font-family:'Liberation Sans', sans-serif;letter-spacing:0.419px;">Exit</div>
<div class="t" style="left:1062.00px;top:580.15px;font-size:14px;color:#000;font-family:'Liberation Sans', sans-serif;">0</div>
<div class="t" style="left:1089.70px;top:580.15px;font-size:14px;color:#000;font-family:'Liberation Sans', sans-serif;letter-spacing:0.193px;">Elapsed Time:</div>
<div class="t" style="left:1222.47px;top:580.15px;font-size:14px;color:#000;font-family:'Liberation Sans', sans-serif;letter-spacing:0.969px;">87</div>
<div class="t" style="left:810.40px;top:580.15px;font-size:14px;color:#000;font-family:'Liberation Sans', sans-serif;letter-spacing:0.330px;">ylogscale</div>
<svg style="left:794px;top:582px" width="11" height="11" viewBox="0 0 11 11">
<rect x="0" y="0" width="11" height="11" fill="#fff"/>
<path d="M2.2 5.5 L4.5 8.2 L8.8 2.5" stroke="#000" stroke-width="1.8" fill="none"/></svg>
<div class="r" style="left:487px;top:975px;width:306px;height:49px;background:#f6f5f4;"></div>
<svg style="left:487px;top:975px" width="306" height="49" viewBox="487 975 306 49">
<rect x="491.5" y="979.5" width="41" height="40.5" rx="3" fill="#4a5b66"/>
<path d="M491.5 1006 L491.5 982.5 Q491.5 979.5 494.5 979.5 L529.5 979.5 Q532.5 979.5 532.5 982.5 L532.5 1006 Z" fill="#00a5de"/>
<rect x="540" y="983" width="1.5" height="35" fill="#8a8a8a"/>
<rect x="549" y="982" width="38" height="36" rx="3" fill="#cfd5da"/>
<rect x="551.5" y="984" width="33" height="30" rx="1" fill="#27323c"/>
<path d="M554.5 988.5 L559 991.5 L554.5 994.5" stroke="#fff" stroke-width="1.3" fill="none"/><rect x="559.5" y="995.5" width="5" height="1.5" fill="#fff"/>
<rect x="601.5" y="982" width="28.5" height="36" rx="2" fill="#00a5de"/>
<rect x="601.5" y="998.5" width="28.5" height="1.2" fill="#0a86b8"/>
<rect x="611.5" y="988" width="8" height="2" fill="#8aa0ab"/><rect x="611.5" y="1005" width="8" height="2" fill="#8aa0ab"/>
<circle cx="663.8" cy="999.9" r="20.6" fill="#00a8e0"/>
<clipPath id="gclip"><circle cx="663.8" cy="999.9" r="20.6"/></clipPath>
<g clip-path="url(#gclip)"><g fill="#6acfef" transform="translate(638 975) scale(0.04785)">
<path d="M100 480 L170 330 L290 190 L380 100 L590 80 L570 180 L490 300 L430 240 L390 170 L320 230 L280 320 L340 350 L420 350 L440 420 L340 480 L260 540 L210 590 L120 520 Z"/>
<path d="M640 380 L700 240 L780 190 L900 240 L980 400 L880 440 L780 420 L660 430 Z"/>
<path d="M590 540 L640 470 L760 440 L900 460 L980 560 L930 700 L860 780 L770 830 L720 700 L650 620 Z"/>
<path d="M450 620 L500 650 L490 760 L440 800 L420 700 Z"/>
</g></g>
<path d="M658.8 995.6 L658.8 1018 L653.3 1013.3 L648.5 1020 L646.1 1018.1 L650 1011.4 L642.8 1010.4 Z" fill="#f2f3f5"/>
<rect x="694.3" y="982.1" width="35.2" height="35.2" rx="2.5" fill="#d8dce0"/>
<rect x="694.3" y="1015" width="35.2" height="2.3" rx="1" fill="#b8bec4"/>
<g fill="#5ecdf0"><rect x="697" y="985" width="6" height="6"/><rect x="705" y="985" width="6" height="6"/><rect x="713" y="985" width="6" height="6"/><rect x="721" y="985" width="6" height="6"/>
<rect x="697" y="992.5" width="6" height="6"/><rect x="721" y="992.5" width="6" height="6"/><rect x="697" y="1000" width="6" height="6"/>
<rect x="697" y="1007.5" width="6" height="6"/><rect x="705" y="1007.5" width="6" height="6"/></g>
<defs><linearGradient id="mgl" x1="0" y1="0" x2="0" y2="1"><stop offset="0" stop-color="#2cb6e8"/><stop offset="1" stop-color="#b0e8fa"/></linearGradient></defs>
<circle cx="709.6" cy="996" r="10" fill="url(#mgl)" stroke="#27323c" stroke-width="1.4"/>
<path d="M718.5 1005 L726 1012.5" stroke="#27323c" stroke-width="3.4" stroke-linecap="round"/>
<rect x="716" y="1002.5" width="3" height="2.5" transform="rotate(45 717.5 1003.7)" fill="#e8c020"/>
<rect x="739" y="983" width="1.5" height="35" fill="#8a8a8a"/>
<path d="M749 984.5 Q749 982.5 751 982.5 L764 982.5 L766 986.5 L779 986.5 Q780.5 986.5 780.5 988 L780.5 1012 L749 1012 Z" fill="#8a8a8a"/>
<g stroke="#b4b4b4" stroke-width="0.5"><line x1="750" y1="984.0" x2="764" y2="984.0"/><line x1="750" y1="985.6" x2="764" y2="985.6"/><line x1="750" y1="987.2" x2="764" y2="987.2"/><line x1="750" y1="988.8" x2="780" y2="988.8"/><line x1="750" y1="990.4" x2="780" y2="990.4"/><line x1="750" y1="992.0" x2="780" y2="992.0"/><line x1="750" y1="993.6" x2="780" y2="993.6"/><line x1="750" y1="995.2" x2="780" y2="995.2"/><line x1="750" y1="996.8" x2="780" y2="996.8"/><line x1="750" y1="998.4" x2="780" y2="998.4"/><line x1="750" y1="1000.0" x2="780" y2="1000.0"/><line x1="750" y1="1001.6" x2="780" y2="1001.6"/><line x1="750" y1="1003.2" x2="780" y2="1003.2"/><line x1="750" y1="1004.8" x2="780" y2="1004.8"/><line x1="750" y1="1006.4" x2="780" y2="1006.4"/><line x1="750" y1="1008.0" x2="780" y2="1008.0"/></g>
<defs><linearGradient id="dfg" x1="0" y1="0" x2="0.3" y2="1"><stop offset="0" stop-color="#86afdc"/><stop offset="1" stop-color="#5f92cf"/></linearGradient></defs>
<path d="M751.5 996 Q751.5 994.5 753 994.5 L785 994.5 Q786.5 994.5 786.3 996 L784.5 1012.5 Q784.2 1014.3 782.5 1014.3 L751 1014.3 Q749.5 1014.3 749.7 1012.5 Z" fill="url(#dfg)" stroke="#3d6db0" stroke-width="0.7"/>
</svg>
<div class="r" style="left:0px;top:0px;width:1280px;height:25px;background:#f5f4f2;"></div>
<div class="r" style="left:0px;top:25px;width:1280px;height:1px;background:#d8d0ca;"></div>
<div class="r" style="left:0px;top:26px;width:1280px;height:1px;background:#b9ada5;"></div>
<svg style="left:2px;top:5px" width="16" height="16" viewBox="0 0 16 16">
<path d="M2 2 L14 14 M14 2 L2 14" stroke="#12a3dc" stroke-width="3.2" stroke-linecap="butt"/>
<path d="M4.5 7.5 Q6 6 9 7 L12 6 L12.5 8 L10 9.5 Q7 10.5 5 9.5 Z" fill="#111"/>
</svg>
<div class="t" style="left:20.00px;top:5.15px;font-size:14px;color:#2e3436;font-family:'Liberation Sans', sans-serif;letter-spacing:0.321px;">Applications</div>
<div class="r" style="left:104px;top:8px;width:4px;height:1px;background:#9a9a9a;"></div>
<div class="r" style="left:104px;top:12px;width:4px;height:1px;background:#9a9a9a;"></div>
<div class="r" style="left:104px;top:16px;width:4px;height:1px;background:#9a9a9a;"></div>
<div class="r" style="left:110px;top:0px;width:199px;height:25px;background:#dcd8d4;border-radius:0 0 5px 5px;border:1px solid #cdc7c2;border-top:none"></div>
<div class="r" style="left:310px;top:0px;width:199px;height:25px;background:#f3f2f0;border-radius:0 0 5px 5px;border:1px solid #d6d1cc;border-top:none"></div>
<div class="r" style="left:510px;top:0px;width:199px;height:25px;background:#f3f2f0;border-radius:0 0 5px 5px;border:1px solid #d6d1cc;border-top:none"></div>
<div class="r" style="left:710px;top:0px;width:199px;height:25px;background:#f3f2f0;border-radius:0 0 5px 5px;border:1px solid #d6d1cc;border-top:none"></div>
<div class="t" style="left:139.00px;top:5.15px;font-size:14px;color:#2e3436;font-family:'Liberation Sans', sans-serif;letter-spacing:0.397px;">/usr/bin/latency-histogr...</div>
<div class="t" style="left:339.00px;top:5.15px;font-size:14px;color:#555753;font-family:'Liberation Sans', sans-serif;letter-spacing:0.365px;">latency (netowork?) 70...</div>
<div class="t" style="left:539.00px;top:5.15px;font-size:14px;color:#2e3436;font-family:'Liberation Sans', sans-serif;letter-spacing:0.356px;">Terminal - cnc@router: ~</div>
<div class="t" style="left:739.00px;top:5.15px;font-size:14px;color:#2e3436;font-family:'Liberation Sans', sans-serif;letter-spacing:0.120px;">Save screenshot as...</div>
<svg style="left:114px;top:6px" width="16" height="14" viewBox="0 0 16 14">
<rect x="0.5" y="0.5" width="14" height="12" fill="#e8e8e6" stroke="#6b6b6b"/>
<rect x="1" y="1" width="13" height="2" fill="#4c78b0"/></svg>
<svg style="left:313px;top:4px" width="18" height="18" viewBox="0 0 18 18">
<defs><linearGradient id="ffg" x1="0.2" y1="1" x2="0.8" y2="0"><stop offset="0" stop-color="#ec7fb0"/><stop offset="0.45" stop-color="#f7a07e"/><stop offset="1" stop-color="#f8ef95"/></linearGradient>
<linearGradient id="ffp" x1="0" y1="0" x2="0" y2="1"><stop offset="0" stop-color="#d58cf0"/><stop offset="1" stop-color="#9a9ae0"/></linearGradient></defs>
<path d="M9 17 Q1.5 17 1.5 10 Q1.5 6 3.5 4.5 L4.5 6 L6 5 Q8 2.5 9.5 4 Q10 1.5 11 1.5 Q14 3 16 7 Q17 9 16.5 11.5 Q15.5 17 9 17 Z" fill="url(#ffg)"/>
<path d="M7.5 6.5 Q10.5 5.5 11.5 8.5 Q12.5 12.5 9.5 14 Q6.5 14.5 6 11.5 Q6 10 8 9.5 Q9.5 9 8.5 8 Z" fill="url(#ffp)"/>
</svg>
<svg style="left:514px;top:6px" width="16" height="15" viewBox="0 0 16 15">
<rect x="0" y="0" width="15" height="14" rx="1" fill="#27323c" stroke="#8c99a3" stroke-width="0.8"/>
<path d="M3 4 L6 6 L3 8" stroke="#fff" stroke-width="1.4" fill="none"/><rect x="7" y="9" width="4" height="1.5" fill="#fff"/></svg>
<svg style="left:714px;top:5px" width="17" height="17" viewBox="0 0 17 17">
<rect x="0.5" y="0.5" width="16" height="12" fill="#12a8e0" stroke="#5a6a75"/>
<rect x="6" y="13" width="5" height="3" fill="#b8c0c6"/>
<path d="M5 3 L11 9 M11 3 L5 9" stroke="#1a2a35" stroke-width="1.2"/>
<circle cx="5" cy="9.5" r="1.3" fill="none" stroke="#1a2a35"/><circle cx="11" cy="9.5" r="1.3" fill="none" stroke="#1a2a35"/></svg>
<div class="r" style="left:929px;top:0px;width:130px;height:25px;background:#aaaaaa;"></div>
<div class="r" style="left:961px;top:0px;width:31px;height:25px;background:#7d7672;"></div>
<svg style="left:936px;top:5px" width="21" height="20" viewBox="0 0 21 20"><rect x="0.5" y="0.5" width="20" height="19" fill="#fafafa" stroke="#222"/><path d="M3 5 L8 5 L9 6.5 L17 6.5 L17 16 L3 16 Z" fill="#b8956a" stroke="#8a6a40" stroke-width="0.6"/><circle cx="10" cy="11.5" r="2.6" fill="none" stroke="#7a6a55" stroke-width="0.9"/></svg>
<div class="r" style="left:964px;top:2px;width:28px;height:22px;background:#c9c4bf;border:1px solid #222"></div>
<div class="r" style="left:968px;top:6px;width:16px;height:8px;background:#12a8e0;"></div>
<div class="r" style="left:961px;top:10px;width:19px;height:15px;background:#c9c4bf;border:1px solid #222"></div>
<div class="r" style="left:979px;top:1px;width:13px;height:14px;background:#d4d0cc;border:1px solid #222"></div>
<div class="r" style="left:981px;top:15px;width:9px;height:9px;background:#bdb8b3;border:1px solid #222"></div>
<div class="r" style="left:993px;top:1px;width:19px;height:23px;background:#fafafa;border:1px solid #222"></div>
<div class="r" style="left:996px;top:5px;width:7px;height:14px;background:#27323c;"></div>
<svg style="left:1002px;top:3px" width="21" height="20" viewBox="0 0 21 20"><rect x="0.5" y="0.5" width="20" height="19" fill="#fafafa" stroke="#222"/><path d="M3 5 L8 5 L9 6.5 L17 6.5 L17 16 L3 16 Z" fill="#b8956a" stroke="#8a6a40" stroke-width="0.6"/><circle cx="10" cy="11.5" r="2.6" fill="none" stroke="#7a6a55" stroke-width="0.9"/></svg>
<svg style="left:1072px;top:6px" width="18" height="17" viewBox="0 0 18 17">
<path d="M0.5 16.5 L0.5 11 L4 11 L4 16.5 Z M4.5 16.5 L4.5 7.5 L8 7.5 L8 16.5 Z M8.5 16.5 L8.5 4 L12 4 L12 16.5 Z M12.5 16.5 L12.5 0.5 L16.5 0.5 L16.5 16.5 Z" fill="#4a78c0" stroke="#1c2a44" stroke-width="0.9"/></svg>
<svg style="left:1099px;top:6px" width="17" height="15" viewBox="0 0 17 15">
<path d="M0 5 L3 5 L7 1 L7 14 L3 10 L0 10 Z" fill="#2e3436"/>
<path d="M9.5 4 Q11.5 7.5 9.5 11" stroke="#2e3436" stroke-width="1.8" fill="none"/>
<path d="M12.5 1.5 Q16 7.5 12.5 13.5" stroke="#2e3436" stroke-width="1.8" fill="none"/></svg>
<svg style="left:1127px;top:5px" width="13" height="17" viewBox="0 0 13 17">
<rect x="4" y="0.5" width="5" height="2" fill="#2e3436"/>
<rect x="1" y="2.5" width="11" height="14" rx="2" fill="none" stroke="#2e3436" stroke-width="1.8"/>
<path d="M7.5 4.5 L4 10 L6.5 10 L5.5 14 L9 8 L6.5 8 Z" fill="#2e3436"/></svg>
<svg style="left:1153px;top:5px" width="13" height="16" viewBox="0 0 13 16">
<path d="M6.5 0.5 Q2 1.5 2 7 L2 11 L0.5 13 L12.5 13 L11 11 L11 7 Q11 1.5 6.5 0.5 Z" fill="#2e3436"/>
<rect x="5" y="13.5" width="3" height="2" rx="1" fill="#2e3436"/></svg>
<div class="t" style="left:1183.00px;top:1.69px;font-size:11px;color:#2e3436;font-family:'Liberation Sans', sans-serif;letter-spacing:0.833px;">2025-11-22</div>
<div class="t" style="left:1198.00px;top:12.69px;font-size:11px;color:#2e3436;font-family:'Liberation Sans', sans-serif;letter-spacing:0.859px;">18:33</div>
<div class="t" style="left:1257.00px;top:5.15px;font-size:14px;color:#2e3436;font-family:'Liberation Sans', sans-serif;letter-spacing:0.609px;">cnc</div>
<svg style="left:846px;top:661px" width="18" height="24" viewBox="0 0 18 24">
<path d="M3.8 5.8 L3.8 18.8 L7.1 16.1 L10 21.1 L11.8 20.1 L9.1 15.1 L12.6 14.4 Z" fill="#000" stroke="#888" stroke-width="1.6" stroke-linejoin="round" opacity="0.35"/>
<path d="M3 4.9 L3 17.9 L6.3 15.2 L9.2 20.2 L11 19.2 L8.3 14.2 L11.8 13.5 Z" fill="#000" stroke="#fff" stroke-width="1.3" stroke-linejoin="round" paint-order="stroke"/>
</svg>
</body></html>
